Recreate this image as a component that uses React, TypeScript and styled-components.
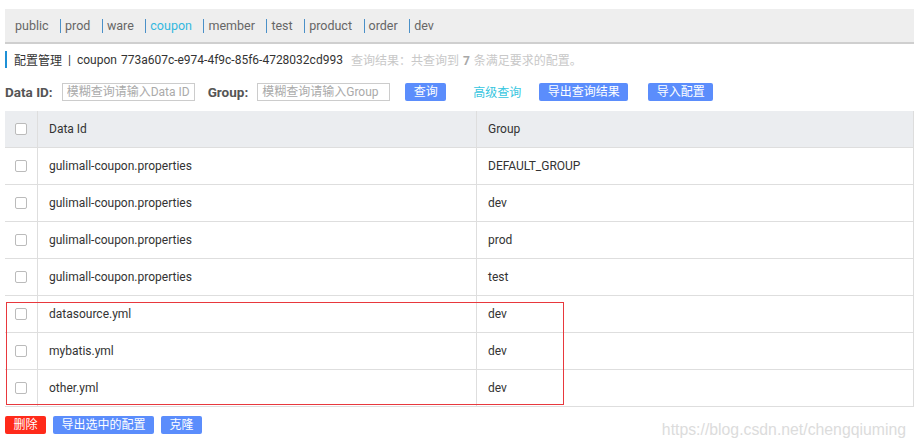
import styled, { createGlobalStyle } from "styled-components";

const GlobalStyle = createGlobalStyle`
  html, body {
    margin: 0;
    padding: 0;
    background: #fff;
    font-family: Roboto, "Noto Sans CJK SC", sans-serif;
  }
`;

const Page = styled.div`
  position: relative;
  width: 915px;
  height: 448px;
  padding: 9px 1px 0 5px;
  box-sizing: border-box;
  color: #333;
  font-size: 12px;
`;

const NsBar = styled.div`
  height: 33px;
  background: #eeeeee;
  border-bottom: 2px solid #cfcfcf;
  display: flex;
  align-items: center;
  padding-left: 10px;
`;

const NsItem = styled.span<{ $active?: boolean; $first?: boolean }>`
  font-size: 12.5px;
  color: ${(p) => (p.$active ? "#33b8df" : "#666")};
  margin-right: 11.5px;
  padding-left: ${(p) => (p.$first ? "0" : "4px")};
  border-left: ${(p) => (p.$first ? "none" : "1px solid #4a90c8")};
  line-height: 14px;
`;

const Crumb = styled.div`
  margin-top: 7px;
  height: 17px;
  border-left: 2px solid #1e90d6;
  display: flex;
  align-items: center;
  padding-left: 7px;
  font-size: 12px;
`;

const CrumbSep = styled.span`
  margin: 0 6px;
`;

const Ns = styled.span`
  margin-right: 4px;
`;

const Hint = styled.span`
  margin-left: 8px;
  color: #c8c8c8;
  font-size: 12px;
  b {
    color: #a8a8a8;
    margin: 0 4px;
  }
`;

const SearchRow = styled.div`
  margin-top: 14px;
  height: 19px;
  display: flex;
  align-items: center;
`;

const Label = styled.span`
  font-weight: bold;
  font-size: 13.5px;
  color: #555;
  margin-right: 9px;
`;

const Input = styled.input`
  width: 133px;
  height: 18px;
  box-sizing: border-box;
  border: 1px solid #ccc;
  padding: 0 4px;
  font-size: 12px;
  font-family: inherit;
  color: #555;
  margin-right: 13px;
  &::placeholder {
    color: #aaa;
  }
`;

const Btn = styled.button<{ $red?: boolean }>`
  height: 18px;
  border: none;
  border-radius: 2px;
  background: ${(p) => (p.$red ? "#ff2a1a" : "#5b8dfc")};
  color: #fff;
  font-family: inherit;
  font-size: 12px;
  padding: 0 8.5px;
  line-height: 18px;
`;

const LinkBtn = styled.span`
  color: #36c6e0;
  font-size: 12px;
  margin: 0 18px 0 27px;
`;

const Table = styled.div`
  margin-top: 10px;
  border-right: 1px solid #ddd;
`;

const Row = styled.div<{ $head?: boolean }>`
  display: grid;
  grid-template-columns: 33px 439px 1fr;
  height: 37px;
  background: ${(p) => (p.$head ? "#ebedf0" : "#fff")};
  border-bottom: 1px solid #dedede;
  box-sizing: border-box;
`;

const Cell = styled.div<{ $check?: boolean }>`
  display: flex;
  align-items: center;
  justify-content: ${(p) => (p.$check ? "center" : "flex-start")};
  padding-left: ${(p) => (p.$check ? "0" : "11px")};
  border-right: 1px solid #dedede;
  font-size: 12px;
  color: #333;
  &:last-child {
    border-right: none;
  }
`;

const Box = styled.span`
  width: 10px;
  height: 10px;
  border: 1px solid #bbb;
  border-radius: 2px;
  background: #fff;
`;

const Mark = styled.div`
  position: absolute;
  left: 6px;
  top: 302px;
  width: 558px;
  height: 103px;
  border: 1px solid #e8383d;
  box-sizing: border-box;
  pointer-events: none;
`;

const Footer = styled.div`
  margin-top: 9px;
  display: flex;
  gap: 7px;
`;

const Watermark = styled.div`
  position: absolute;
  right: 9px;
  bottom: 9px;
  font-family: "Liberation Sans", Arial, sans-serif;
  font-size: 15.8px;
  color: #dcdcdc;
`;

const namespaces = ["public", "prod", "ware", "coupon", "member", "test", "product", "order", "dev"];

const rows = [
  ["gulimall-coupon.properties", "DEFAULT_GROUP"],
  ["gulimall-coupon.properties", "dev"],
  ["gulimall-coupon.properties", "prod"],
  ["gulimall-coupon.properties", "test"],
  ["datasource.yml", "dev"],
  ["mybatis.yml", "dev"],
  ["other.yml", "dev"],
];

export default function App() {
  return (
    <Page>
      <GlobalStyle />
      <NsBar>
        {namespaces.map((n, i) => (
          <NsItem key={n} $first={i === 0} $active={n === "coupon"}>
            {n}
          </NsItem>
        ))}
      </NsBar>
      <Crumb>
        配置管理<CrumbSep>|</CrumbSep>
        <Ns>coupon</Ns>773a607c-e974-4f9c-85f6-4728032cd993
        <Hint>
          查询结果：共查询到<b>7</b>条满足要求的配置。
        </Hint>
      </Crumb>
      <SearchRow>
        <Label>Data ID:</Label>
        <Input placeholder="模糊查询请输入Data ID" />
        <Label>Group:</Label>
        <Input placeholder="模糊查询请输入Group" />
        <Btn style={{ marginLeft: 2 }}>查询</Btn>
        <LinkBtn>高级查询</LinkBtn>
        <Btn>导出查询结果</Btn>
        <Btn style={{ marginLeft: 20 }}>导入配置</Btn>
      </SearchRow>
      <Table>
        <Row $head>
          <Cell $check>
            <Box />
          </Cell>
          <Cell>Data Id</Cell>
          <Cell>Group</Cell>
        </Row>
        {rows.map(([id, g], i) => (
          <Row key={i}>
            <Cell $check>
              <Box />
            </Cell>
            <Cell>{id}</Cell>
            <Cell>{g}</Cell>
          </Row>
        ))}
      </Table>
      <Footer>
        <Btn $red>删除</Btn>
        <Btn>导出选中的配置</Btn>
        <Btn>克隆</Btn>
      </Footer>
      <Mark />
      <Watermark>https://blog.csdn.net/chengqiuming</Watermark>
    </Page>
  );
}
